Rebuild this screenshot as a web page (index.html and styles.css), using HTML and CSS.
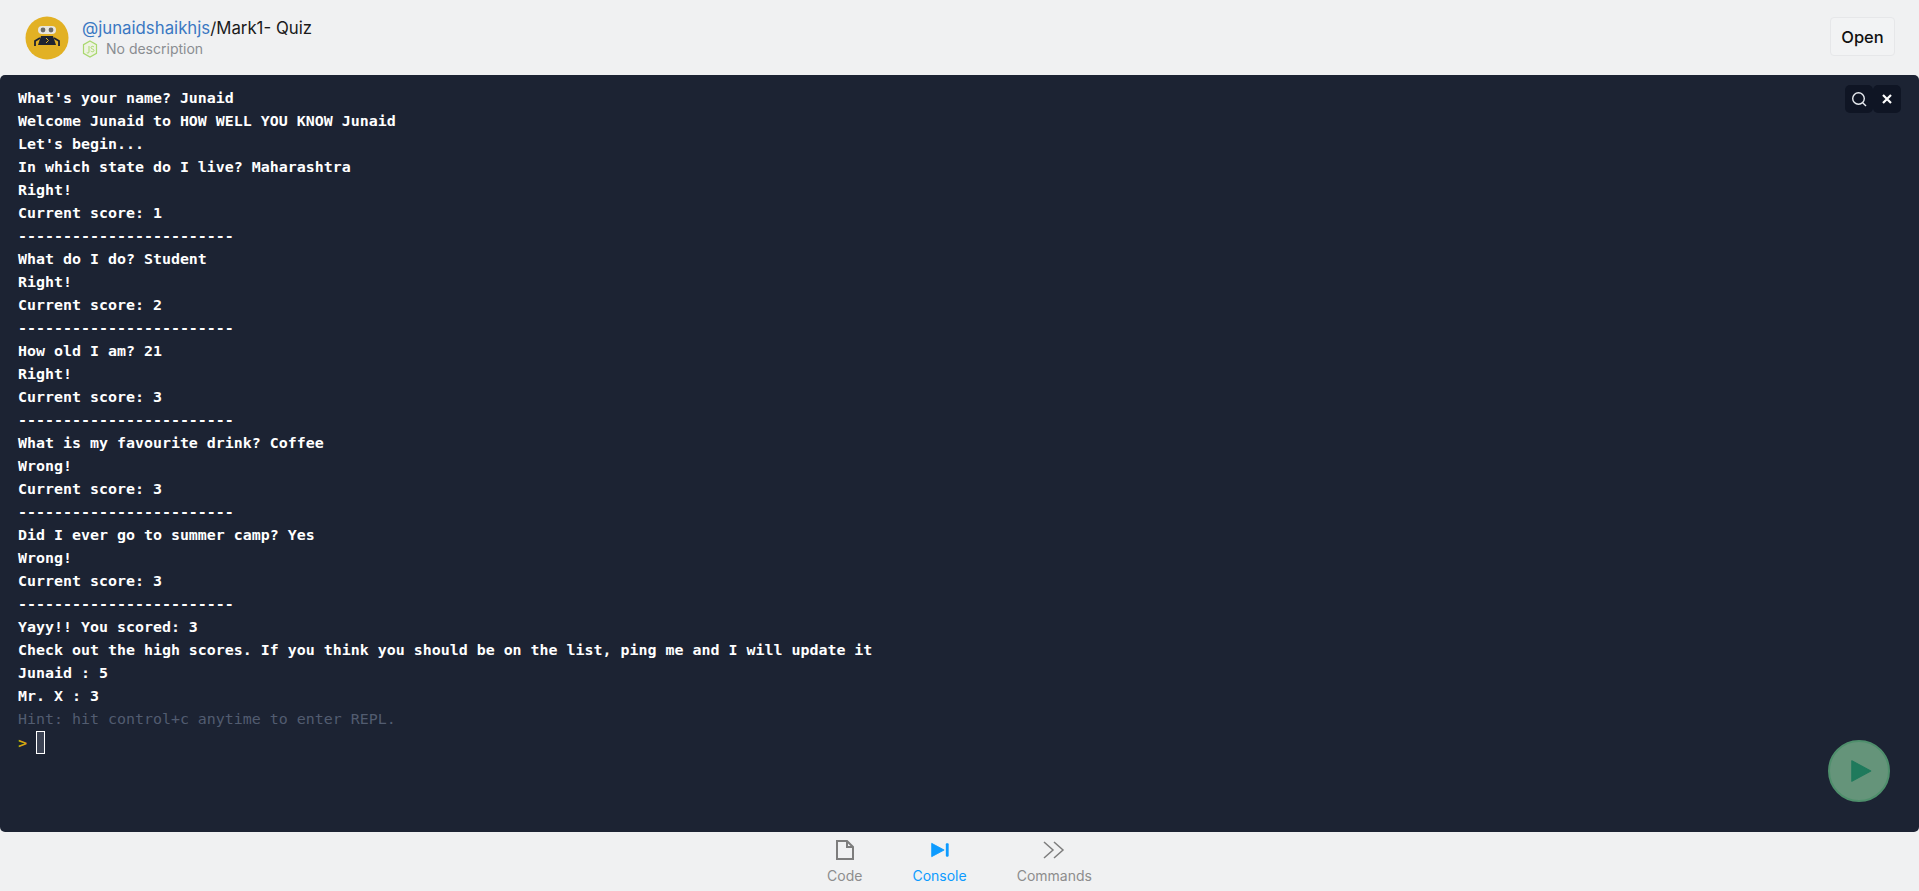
FILE: index.html
```html
<!DOCTYPE html>
<html lang="en">
<head>
<meta charset="utf-8">
<title>Mark1- Quiz</title>
<link rel="stylesheet" href="styles.css">
</head>
<body>
<div class="app">
  <header class="topbar">
    <div class="repl-info">
      <svg class="avatar" viewBox="0 0 44 44" aria-hidden="true">
        <circle cx="22" cy="22" r="21.5" fill="#e2b124"/>
        <rect x="13" y="10" width="18" height="8" rx="4" fill="#e8e6df"/>
        <circle cx="18" cy="14" r="2.4" fill="#6a6a66"/>
        <circle cx="26" cy="14" r="2.4" fill="#6a6a66"/>
        <path d="M16 20h12l3 9H13z" fill="#1f2430"/>
        <path d="M21 22l2.500 2.500-2.500 2.500" stroke="#e2b124" stroke-width="1" fill="none"/>
        <path d="M15 22l-5 3v5M29 22l5 3v5" stroke="#1f2430" stroke-width="1.800" fill="none"/>
      </svg>
      <div class="repl-text">
        <div class="repl-title"><a class="owner">@junaidshaikhjs</a>/Mark1- Quiz</div>
        <div class="repl-desc">
          <svg class="lang" viewBox="0 0 16 18" aria-hidden="true">
            <path d="M8 1l6.500 3.700v8.600L8 17l-6.500-3.700V4.700z" fill="#eef3e2" stroke="#a9d86e" stroke-width="1.200"/>
            <path d="M7 6v6c0 1.200-1.500 1.200-2.200.6M12 7c-.8-1-3-1-3 .6 0 1.800 3 1 3 2.800 0 1.700-2.400 1.700-3.300.5" fill="none" stroke="#a9d86e" stroke-width="1"/>
          </svg>
          <span>No description</span>
        </div>
      </div>
    </div>
    <button class="open-btn">Open</button>
  </header>

  <main class="console">
<pre class="output">What's your name? Junaid
Welcome Junaid to HOW WELL YOU KNOW Junaid
Let's begin...
In which state do I live? Maharashtra
Right!
Current score: 1
------------------------
What do I do? Student
Right!
Current score: 2
------------------------
How old I am? 21
Right!
Current score: 3
------------------------
What is my favourite drink? Coffee
Wrong!
Current score: 3
------------------------
Did I ever go to summer camp? Yes
Wrong!
Current score: 3
------------------------
Yayy!! You scored: 3
Check out the high scores. If you think you should be on the list, ping me and I will update it
Junaid : 5
Mr. X : 3
<span class="hint">Hint: hit control+c anytime to enter REPL.</span>
<span class="prompt">&gt;</span> <span class="cursor"></span></pre>
    <div class="term-tools">
      <button class="tool" aria-label="Search">
        <svg viewBox="0 0 16 16" width="16" height="16"><circle cx="7.500" cy="7.500" r="5.800" fill="none" stroke="#e8ebf0" stroke-width="1.400"/><path d="M11.700 11.700L15 15" stroke="#e8ebf0" stroke-width="1.400"/></svg>
      </button>
      <button class="tool" aria-label="Close">
        <svg viewBox="0 0 12 12" width="12" height="12"><path d="M2 2l8 8M10 2l-8 8" stroke="#fff" stroke-width="2.200"/></svg>
      </button>
    </div>
    <button class="run" aria-label="Run">
      <svg class="run-icon" viewBox="0 0 24 24" width="26" height="26"><path d="M3.500 2.500v19L21 12z" fill="#1f7a5c" stroke="#1f7a5c" stroke-width="1" stroke-linejoin="round"/></svg>
    </button>
  </main>

  <nav class="tabs">
    <a class="tab">
      <svg class="tab-icon" viewBox="0 0 20 22"><path d="M2 2h10l6 6v12H2z M12 2v6h6" fill="none" stroke="#7d7d7d" stroke-width="2"/></svg>
      <span>Code</span>
    </a>
    <a class="tab active">
      <svg class="tab-icon" viewBox="0 0 24 22"><path d="M2 3l15 8-15 8z" fill="#0d9bff" stroke="#0d9bff" stroke-width="1" stroke-linejoin="round"/><rect x="19" y="3" width="3.400" height="16" rx="1" fill="#0d9bff"/></svg>
      <span>Console</span>
    </a>
    <a class="tab">
      <svg class="tab-icon wide" viewBox="0 0 24 22"><path d="M2 3l9 8-9 8M12 3l9 8-9 8" fill="none" stroke="#7d7d7d" stroke-width="1.500"/></svg>
      <span>Commands</span>
    </a>
  </nav>
</div>
</body>
</html>
```
FILE: styles.css
```css
* { box-sizing: border-box; }
html, body { margin: 0; height: 100%; }
body { background: #f0f1f2; font-family: Inter, "Noto Sans", sans-serif; overflow: hidden; }
.app { display: flex; flex-direction: column; height: 891px; }

.topbar { height: 75px; flex: none; display: flex; align-items: center; justify-content: space-between; padding: 0 25px 0 25px; }
.repl-info { display: flex; align-items: center; gap: 13px; }
.avatar { width: 44px; height: 44px; display: block; }
.repl-text { display: flex; flex-direction: column; padding-top: 1px; }
.repl-title { font-size: 16.800px; line-height: 22px; color: #1a1a1a; }
.owner { color: #3a78c2; }
.repl-desc { display: flex; align-items: center; gap: 8px; font-size: 14px; line-height: 20px; color: #8a8d91; }
.lang { width: 16px; height: 18px; }
.open-btn { width: 65px; height: 39px; margin-top: -2px; margin-right: -1px; border: 1px solid #e6e7e9; border-radius: 4px; background: #f2f3f4; font: 500 16.500px Inter, sans-serif; color: #111; padding: 0; }

.console { flex: none; height: 757px; position: relative; background: #1c2333; border-radius: 5px; padding: 12px 18px; }
.output { margin: 0; font-family: "DejaVu Sans Mono", "Liberation Mono", monospace; font-weight: 700; font-size: 14.950px; line-height: 23px; color: #fff; }
.hint { color: #525c70; font-weight: 400; }
.prompt { color: #d4a80f; }
.cursor { display: inline-block; width: 9px; height: 23px; vertical-align: -6px; border: 1px solid #fff; background: #3c4354; }

.term-tools { position: absolute; top: 10px; right: 18px; display: flex; }
.tool { width: 28px; height: 28px; display: flex; align-items: center; justify-content: center; padding: 0; border: 0; border-radius: 5px; background: #0f1524; }
.run { position: absolute; right: 29px; top: 665px; width: 62px; height: 62px; border-radius: 50%; border: 2px solid #4f8f6c; background: #65947a; display: flex; align-items: center; justify-content: center; padding: 0 0 0 3px; }

.tabs { flex: 1; display: flex; justify-content: center; gap: 50px; padding-top: 7px; }
.tab { display: flex; flex-direction: column; align-items: center; font-size: 14px; line-height: 18px; color: #8d8d8d; }
.tab.active { color: #0d9bff; }
.tab-icon { width: 20px; height: 22px; margin-bottom: 6px; }
.tab-icon.wide { width: 24px; }
```
